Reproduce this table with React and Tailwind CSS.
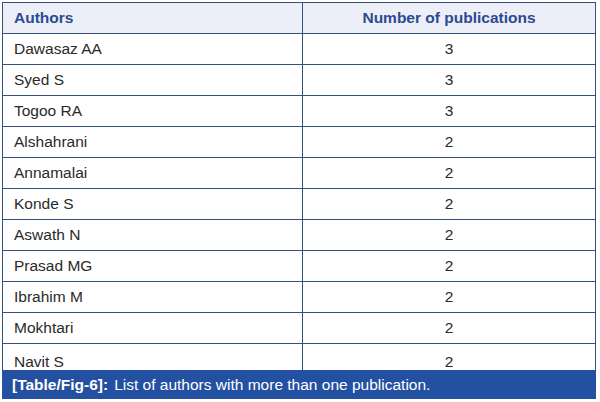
import React from "react";

const rows = [
  ["Dawasaz AA", "3"],
  ["Syed S", "3"],
  ["Togoo RA", "3"],
  ["Alshahrani", "2"],
  ["Annamalai", "2"],
  ["Konde S", "2"],
  ["Aswath N", "2"],
  ["Prasad MG", "2"],
  ["Ibrahim M", "2"],
  ["Mokhtari", "2"],
  ["Navit S", "2"],
];

export default function App() {
  return (
    <div
      className="w-[600px] h-[402px] bg-white pt-[2px] pl-[2px]"
      style={{ fontFamily: '"Liberation Sans", Arial, sans-serif' }}
    >
      <div className="w-[594px] flex flex-col">
        <div className="border-l border-r border-t border-[#34507f]">
          <div className="flex h-[31px] bg-[#eceff8] border-b border-[#34507f] text-[15.5px] font-bold text-[#2b4a90]">
            <div className="w-[300px] border-r border-[#34507f] flex items-center pl-[11px]">Authors</div>
            <div className="flex-1 flex items-center justify-center">Number of publications</div>
          </div>
          {rows.map(([a, n], i) => {
            const last = i === rows.length - 1;
            return (
              <div
                key={a}
                className={
                  last
                    ? "flex h-[26px] text-[15.5px] text-[#2a2a2a]"
                    : "flex h-[31px] border-b border-[#34507f] text-[15.5px] text-[#2a2a2a]"
                }
              >
                <div className={last ? "w-[300px] border-r border-[#34507f] flex items-start pt-[6px] pl-[11px]" : "w-[300px] border-r border-[#34507f] flex items-center pl-[11px]"}>{a}</div>
                <div className={last ? "flex-1 flex items-start pt-[6px] justify-center" : "flex-1 flex items-center justify-center"}>{n}</div>
              </div>
            );
          })}
        </div>
        <div className="h-[29px] bg-[#2350a0] text-white text-[15.5px] flex items-center pl-[10px]">
          <span className="font-bold">[Table/Fig-6]:</span>
          <span className="ml-[6px]">List of authors with more than one publication.</span>
        </div>
      </div>
    </div>
  );
}
